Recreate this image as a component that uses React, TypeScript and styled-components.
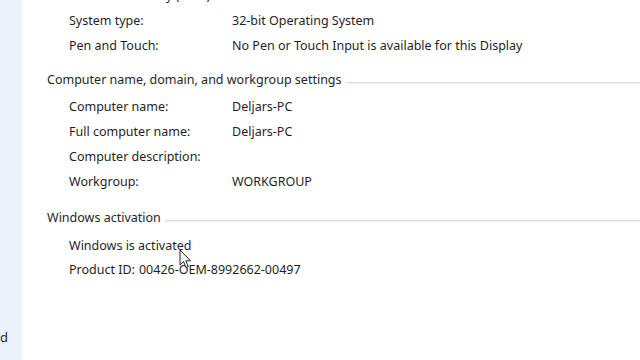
import React from "react";
import styled, { createGlobalStyle } from "styled-components";

const GlobalStyle = createGlobalStyle`
  html, body {
    margin: 0;
    padding: 0;
    background: #ffffff;
    overflow: hidden;
  }
  body {
    font-family: "Noto Sans", "Open Sans", sans-serif;
    color: #1f1f1f;
  }
`;

const Window = styled.div`
  display: flex;
  width: 640px;
  height: 360px;
  overflow: hidden;
  position: relative;
`;

const Sidebar = styled.div`
  width: 22px;
  flex: none;
  background: #ebf1fa;
  border-right: 1px solid #f1f4f8;
  display: flex;
  flex-direction: column;
  justify-content: flex-end;
  padding-bottom: 14px;
  box-sizing: border-box;
  overflow: hidden;
`;

const SideLabel = styled.div`
  font-size: 13px;
  color: #2a2a2a;
  white-space: nowrap;
`;

const Main = styled.div`
  flex: 1;
  padding-left: 25px;
  margin-top: -17px;
  display: flex;
  flex-direction: column;
`;

const Rows = styled.div<{ $top?: number }>`
  display: flex;
  flex-direction: column;
  padding-left: 22px;
  margin-top: ${({ $top }) => $top ?? 0}px;
`;

const Row = styled.div<{ $h?: number }>`
  display: flex;
  align-items: center;
  height: ${({ $h }) => $h ?? 25}px;
  font-size: 12.5px;
  white-space: nowrap;
`;

const Label = styled.span`
  width: 163px;
  flex: none;
`;

const Value = styled.span<{ $gap?: number }>`
  margin-left: ${({ $gap }) => $gap ?? 0}px;
`;

const Header = styled.div<{ $top: number }>`
  display: flex;
  align-items: center;
  height: 20px;
  margin-top: ${({ $top }) => $top}px;
  font-size: 12.5px;
  white-space: nowrap;
  color: #262626;

  &::after {
    content: "";
    flex: 1;
    margin-left: 4px;
    margin-top: 7px;
    height: 1px;
    background: #d9dcdf;
    box-shadow: 0 1px 0 #f4f5f6;
  }
`;

const Cursor = styled.svg`
  position: absolute;
  left: 179px;
  top: 249px;
`;

const sysRows = [
  ["Installed memory (RAM):", "2.00 GB"],
  ["System type:", "32-bit Operating System"],
  ["Pen and Touch:", "No Pen or Touch Input is available for this Display"],
];

const nameRows = [
  ["Computer name:", "Deljars-PC"],
  ["Full computer name:", "Deljars-PC"],
  ["Computer description:", ""],
  ["Workgroup:", "WORKGROUP"],
];

export default function App() {
  return (
    <Window>
      <GlobalStyle />
      <Sidebar>
        <SideLabel>d</SideLabel>
      </Sidebar>
      <Main>
        <Rows>
          {sysRows.map(([label, value]) => (
            <Row key={label}>
              <Label>{label}</Label>
              <Value>{value}</Value>
            </Row>
          ))}
        </Rows>
        <Header $top={11}>Computer name, domain, and workgroup settings</Header>
        <Rows $top={5}>
          {nameRows.map(([label, value]) => (
            <Row key={label}>
              <Label>{label}</Label>
              <Value>{value}</Value>
            </Row>
          ))}
        </Rows>
        <Header $top={13}>Windows activation</Header>
        <Rows $top={6}>
          <Row $h={24}>Windows is activated</Row>
          <Row $h={25}>
            Product ID:<Value $gap={4}>00426-OEM-8992662-00497</Value>
          </Row>
        </Rows>
      </Main>
      <Cursor width="14" height="20" viewBox="0 0 14 20">
        <path
          d="M1 1 L1 16 L4.5 12.5 L7 18.5 L9.3 17.5 L6.8 11.8 L11.5 11.8 Z"
          fill="#ffffff"
          stroke="#222"
          strokeWidth="1"
          strokeLinejoin="round"
        />
      </Cursor>
    </Window>
  );
}
